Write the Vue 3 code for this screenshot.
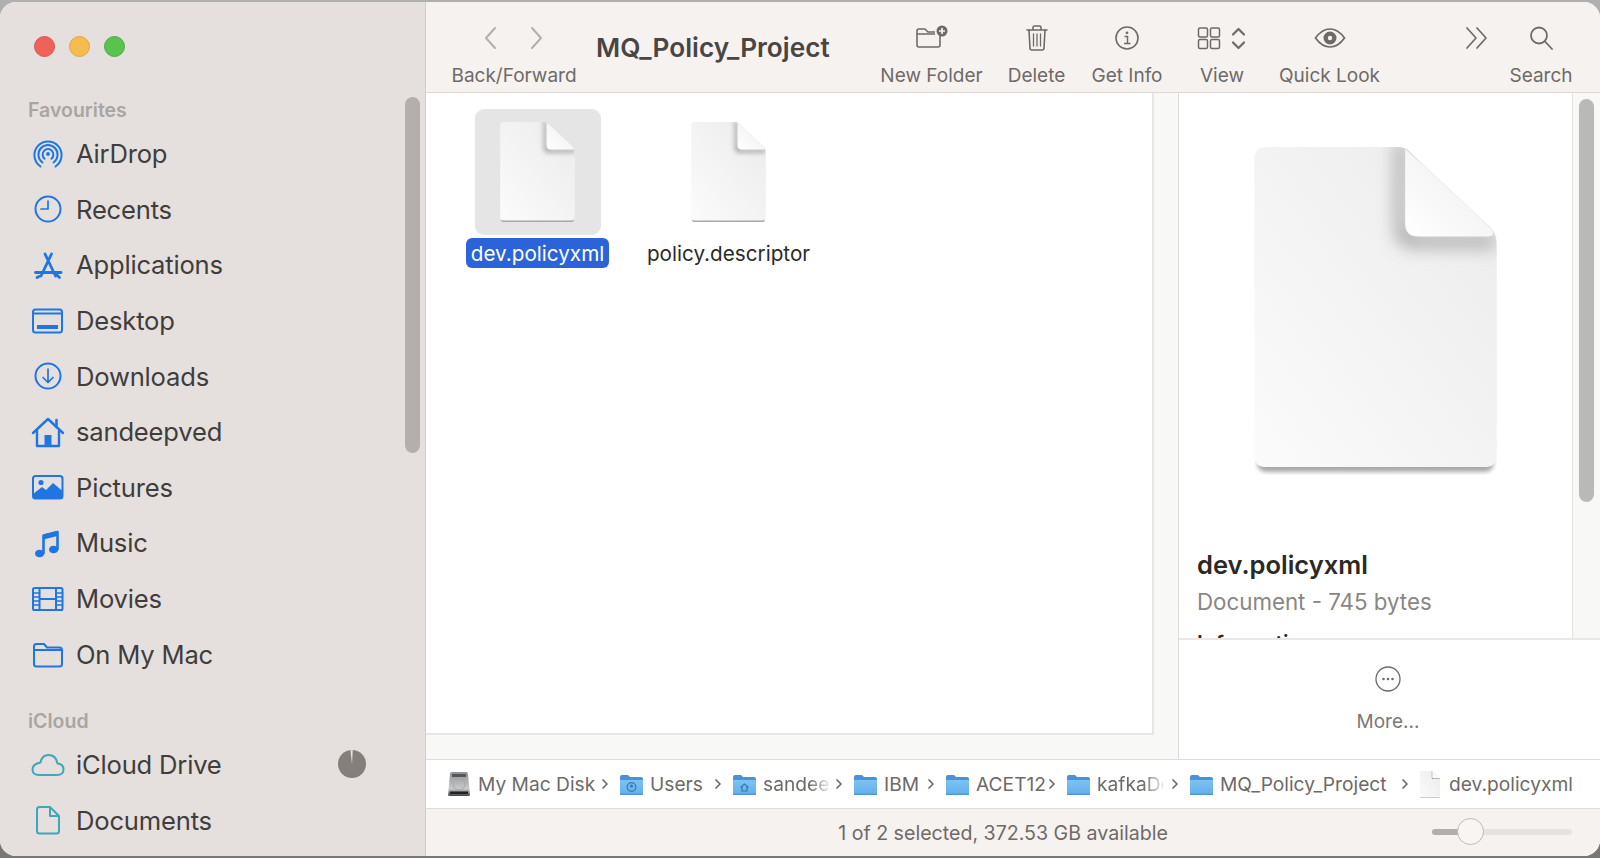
<script setup>
const favourites = [
  { name: 'AirDrop', icon: 'airdrop' },
  { name: 'Recents', icon: 'recents' },
  { name: 'Applications', icon: 'apps' },
  { name: 'Desktop', icon: 'desktop' },
  { name: 'Downloads', icon: 'downloads' },
  { name: 'sandeepved', icon: 'home' },
  { name: 'Pictures', icon: 'pictures' },
  { name: 'Music', icon: 'music' },
  { name: 'Movies', icon: 'movies' },
  { name: 'On My Mac', icon: 'folder' },
]
const crumbs = [
  { label: 'My Mac Disk', icon: 'disk', w: 173 },
  { label: 'Users', icon: 'users', w: 113 },
  { label: 'sandee', icon: 'homefolder', w: 121, fade: true },
  { label: 'IBM', icon: 'plain', w: 92 },
  { label: 'ACET12', icon: 'plain', w: 121 },
  { label: 'kafkaDev', icon: 'plain', w: 123, fade: true },
  { label: 'MQ_Policy_Project', icon: 'plain', w: 230 },
  { label: 'dev.policyxml', icon: 'doc', w: 155, last: true },
]
</script>

<template>
  <div class="page">
    <svg class="defs" width="0" height="0" aria-hidden="true">
      <defs>
        <linearGradient id="bodyGrad" x1="1" y1="0" x2="0" y2="1">
          <stop offset="0" stop-color="#ebebeb" />
          <stop offset="1" stop-color="#fbfbfb" />
        </linearGradient>
        <linearGradient id="foldGrad" x1="0" y1="1" x2="1" y2="0">
          <stop offset="0" stop-color="#ffffff" />
          <stop offset="0.55" stop-color="#f5f5f5" />
          <stop offset="1" stop-color="#dcdcdc" />
        </linearGradient>
        <filter id="soft" x="-40%" y="-40%" width="180%" height="180%">
          <feGaussianBlur stdDeviation="9" />
        </filter>
        <filter id="softSmall" x="-20%" y="-20%" width="140%" height="140%">
          <feGaussianBlur stdDeviation="2" />
        </filter>
        <clipPath id="bodyClip">
          <path d="M12 0H143Q150 0 155 5L235 80Q241 87 241 96V306Q241 318 229 318H12Q0 318 0 306V12Q0 0 12 0Z" />
        </clipPath>
        <symbol id="docIcon" viewBox="0 0 241 326">
          <rect x="3" y="306" width="235" height="17" rx="9" fill="#a8a8a8" filter="url(#softSmall)" />
          <path d="M12 0H143Q150 0 155 5L235 80Q241 87 241 96V306Q241 318 229 318H12Q0 318 0 306V12Q0 0 12 0Z" fill="url(#bodyGrad)" />
          <g clip-path="url(#bodyClip)">
            <path d="M150 -6V76Q150 89 163 89H241V98H158Q142 98 142 82V-6Z" fill="#8a8a8a" filter="url(#soft)" />
          </g>
          <path d="M150 2L236 82Q240 89 232 89H163Q150 89 150 76Z" fill="url(#foldGrad)" />
        </symbol>
      </defs>
    </svg>

    <div class="window">
      <aside class="sidebar">
        <div class="lights">
          <span class="light red"></span>
          <span class="light yellow"></span>
          <span class="light green"></span>
        </div>
        <div class="section-title">Favourites</div>
        <div v-for="item in favourites" :key="item.name" class="side-item">
          <span class="side-icon">
            <svg width="34" height="34" viewBox="0 0 34 34" fill="none" stroke="#1f76e3" stroke-width="2" stroke-linecap="round" stroke-linejoin="round">
              <template v-if="item.icon === 'airdrop'">
                <path d="M9.5 29.5A13.6 13.6 0 1 1 24.5 29.5" />
                <path d="M11.5 25.5A9.6 9.6 0 1 1 22.5 25.5" />
                <path d="M13.6 21.7A5.4 5.4 0 1 1 20.4 21.7" />
                <circle cx="17" cy="17" r="1.9" fill="#1f76e3" stroke="none" />
              </template>
              <template v-else-if="item.icon === 'recents'">
                <circle cx="17" cy="17" r="12.5" />
                <path d="M17 9V17H10" stroke-width="1.7" />
              </template>
              <template v-else-if="item.icon === 'apps'">
                <path d="M14 6L24.500 28M20.500 6L10 28" stroke-width="2.800" />
                <path d="M4.500 24.500H30" stroke-width="2.800" />
                <path d="M8 28.500L6 29.500M26 27L28.500 29.500" stroke-width="2.800" />
              </template>
              <template v-else-if="item.icon === 'desktop'">
                <rect x="2" y="5.5" width="29" height="23" rx="2.5" />
                <path d="M2 9.5H31" />
                <rect x="6" y="21" width="21" height="4" fill="#1f76e3" stroke="none" />
              </template>
              <template v-else-if="item.icon === 'downloads'">
                <circle cx="17" cy="17" r="12.5" />
                <path d="M17 10V23M12 18.5L17 23.5L22 18.5" stroke-width="1.7" />
              </template>
              <template v-else-if="item.icon === 'home'">
                <path d="M2 18L17 4L32 18" stroke-width="2.4" />
                <path d="M25.5 5V12" stroke-width="2.6" />
                <path d="M6 16V31H28V16" stroke-width="2.4" />
                <rect x="13.5" y="20" width="7" height="11" fill="#1f76e3" stroke="none" />
              </template>
              <template v-else-if="item.icon === 'pictures'">
                <rect x="2" y="6" width="29.5" height="22.5" rx="2.5" />
                <circle cx="10" cy="12.5" r="2.6" fill="#1f76e3" stroke="none" />
                <path d="M2 24L11 17L15 20L22 13L31.5 21V27Q31.5 29 29 29H4Q2 29 2 27Z" fill="#1f76e3" stroke="none" />
              </template>
              <template v-else-if="item.icon === 'music'">
                <path d="M12.5 27V9.5L26.5 6V23" stroke-width="2.6" />
                <ellipse cx="8.6" cy="27.5" rx="4.6" ry="3.8" fill="#1f76e3" stroke="none" />
                <ellipse cx="22.6" cy="23.5" rx="4.6" ry="3.8" fill="#1f76e3" stroke="none" />
                <path d="M12.5 8.5L26.5 5V10L12.5 13.5Z" fill="#1f76e3" stroke="none" />
              </template>
              <template v-else-if="item.icon === 'movies'">
                <rect x="2" y="6" width="29.5" height="22" rx="1.6" />
                <path d="M8.5 6V28M25 6V28M8.5 17H25" />
                <path d="M2 11H8.5M2 15H8.5M2 19H8.5M2 23H8.5M25 11H31.5M25 15H31.5M25 19H31.5M25 23H31.5" stroke-width="1.6" />
              </template>
              <template v-else>
                <path d="M3 10V27Q3 29.5 5.5 29.5H28.5Q31 29.5 31 27V13Q31 10.5 28.5 10.5H16L13 7H5.5Q3 7 3 9.5V13H31" />
              </template>
            </svg>
          </span>
          <span class="side-label">{{ item.name }}</span>
        </div>

        <div class="section-title cloud-title">iCloud</div>
        <div class="side-item">
          <span class="side-icon">
            <svg width="34" height="34" viewBox="0 0 34 34" fill="none" stroke="#3fa7b8" stroke-width="2" stroke-linejoin="round">
              <path d="M8 27H26Q32.5 27 32.5 21.5Q32.5 16 26.5 15.5Q25 7 17.5 7Q11 7 9.5 14.5Q1.5 16 1.5 21.5Q1.5 27 8 27Z" />
            </svg>
          </span>
          <span class="side-label">iCloud Drive</span>
          <svg class="pie" width="28" height="28" viewBox="0 0 28 28">
            <circle cx="14" cy="14" r="14" fill="#857f7c" />
            <path d="M14 14L12.4 .3H14.8Z" fill="#e8e4e2" />
          </svg>
        </div>
        <div class="side-item">
          <span class="side-icon">
            <svg width="34" height="34" viewBox="0 0 34 34" fill="none" stroke="#3fa7b8" stroke-width="2" stroke-linejoin="round">
              <path d="M8.5 4H19L28 13V28Q28 30.5 25.5 30.5H8.5Q6 30.5 6 28V6.500Q6 4 8.500 4Z" />
              <path d="M19 4V13H28" />
            </svg>
          </span>
          <span class="side-label">Documents</span>
        </div>
        <span class="thumb side-thumb"></span>
      </aside>

      <div class="main">
        <header class="toolbar">
          <div class="tool t-nav">
            <span class="tool-icon nav-icons">
              <svg width="18" height="26" viewBox="0 0 18 26" fill="none" stroke="#b3afad" stroke-width="2" stroke-linecap="round" stroke-linejoin="round"><path d="M13 3L4 13L13 23" /></svg>
              <svg width="18" height="26" viewBox="0 0 18 26" fill="none" stroke="#b3afad" stroke-width="2" stroke-linecap="round" stroke-linejoin="round"><path d="M5 3L14 13L5 23" /></svg>
            </span>
            <span class="tool-label">Back/Forward</span>
          </div>
          <div class="title">MQ_Policy_Project</div>
          <div class="tool t-new">
            <span class="tool-icon">
              <svg width="34" height="28" viewBox="0 0 34 28" fill="none" stroke="#6e6a68" stroke-width="1.6" stroke-linejoin="round">
                <path d="M25 10V21Q25 23 23 23H4Q2 23 2 21V7Q2 5 4 5H10L13 8H20M2 10H20" />
                <circle cx="27" cy="7" r="5.500" fill="#6e6a68" stroke="none" />
                <path d="M27 4V10M24 7H30" stroke="#f6f2f0" stroke-width="1.700" />
              </svg>
            </span>
            <span class="tool-label">New Folder</span>
          </div>
          <div class="tool t-del">
            <span class="tool-icon">
              <svg width="24" height="28" viewBox="0 0 24 28" fill="none" stroke="#6e6a68" stroke-width="1.6" stroke-linejoin="round" stroke-linecap="round">
                <path d="M2 6H22M8 6V3.500Q8 2 9.500 2H14.500Q16 2 16 3.500V6" />
                <path d="M4 6L5 24Q5 26 7 26H17Q19 26 19 24L20 6" />
                <path d="M8.500 10V22M12 10V22M15.500 10V22" stroke-width="1.300" />
              </svg>
            </span>
            <span class="tool-label">Delete</span>
          </div>
          <div class="tool t-info">
            <span class="tool-icon">
              <svg width="26" height="26" viewBox="0 0 26 26" fill="none" stroke="#6e6a68" stroke-width="1.600">
                <circle cx="13" cy="13" r="11" />
                <circle cx="13" cy="7.800" r="1.400" fill="#6e6a68" stroke="none" />
                <path d="M10.500 11.500H13.500V18.500M10 18.500H16.500" stroke-width="1.500" />
              </svg>
            </span>
            <span class="tool-label">Get Info</span>
          </div>
          <div class="tool t-view">
            <span class="tool-icon">
              <svg width="50" height="26" viewBox="0 0 50 26" fill="none" stroke="#6e6a68" stroke-width="1.500">
                <rect x="1.500" y="3" width="9" height="9" rx="1.500" />
                <rect x="13.500" y="3" width="9" height="9" rx="1.500" />
                <rect x="1.500" y="14.500" width="9" height="9" rx="1.500" />
                <rect x="13.500" y="14.500" width="9" height="9" rx="1.500" />
                <path d="M36 9.500L41.500 4L47 9.500M36 17.500L41.500 23L47 17.500" stroke-width="2.200" stroke-linecap="round" stroke-linejoin="round" />
              </svg>
            </span>
            <span class="tool-label">View</span>
          </div>
          <div class="tool t-look">
            <span class="tool-icon">
              <svg width="32" height="22" viewBox="0 0 32 22" fill="none" stroke="#6e6a68" stroke-width="1.700">
                <path d="M1.500 11Q8 2 16 2Q24 2 30.500 11Q24 20 16 20Q8 20 1.500 11Z" />
                <circle cx="16" cy="11" r="6.500" fill="#6e6a68" stroke="none" />
                <circle cx="16" cy="11" r="2.200" fill="#f6f2f0" stroke="none" />
              </svg>
            </span>
            <span class="tool-label">Quick Look</span>
          </div>
          <div class="tool t-more">
            <span class="tool-icon">
              <svg width="24" height="24" viewBox="0 0 24 24" fill="none" stroke="#6e6a68" stroke-width="1.700" stroke-linecap="round" stroke-linejoin="round">
                <path d="M2 2L11 12L2 22M12 2L21 12L12 22" />
              </svg>
            </span>
          </div>
          <div class="tool t-search">
            <span class="tool-icon">
              <svg width="26" height="26" viewBox="0 0 26 26" fill="none" stroke="#6e6a68" stroke-width="1.800" stroke-linecap="round">
                <circle cx="11" cy="10.500" r="8" />
                <path d="M17 16.500L24 24" />
              </svg>
            </span>
            <span class="tool-label">Search</span>
          </div>
        </header>

        <div class="content">
          <section class="files-col">
            <div class="files">
              <div class="file">
                <div class="file-art selected">
                  <svg class="small-doc" width="75" height="101"><use href="#docIcon" /></svg>
                </div>
                <span class="file-name active">dev.policyxml</span>
              </div>
              <div class="file">
                <div class="file-art">
                  <svg class="small-doc" width="75" height="101"><use href="#docIcon" /></svg>
                </div>
                <span class="file-name">policy.descriptor</span>
              </div>
            </div>
          </section>

          <section class="preview-col">
            <div class="preview-top">
              <div class="preview-body">
                <svg class="big-doc" width="243" height="328"><use href="#docIcon" /></svg>
                <div class="preview-name">dev.policyxml</div>
                <div class="preview-meta">Document - 745 bytes</div>
                <div class="preview-info">Information</div>
              </div>
              <div class="preview-gutter"><span class="thumb preview-thumb"></span></div>
            </div>
            <div class="actions">
              <svg width="26" height="26" viewBox="0 0 26 26" fill="none" stroke="#6e6a68" stroke-width="1.300">
                <circle cx="13" cy="13" r="12" />
                <circle cx="8.500" cy="13" r="1.300" fill="#6e6a68" stroke="none" />
                <circle cx="13" cy="13" r="1.300" fill="#6e6a68" stroke="none" />
                <circle cx="17.500" cy="13" r="1.300" fill="#6e6a68" stroke="none" />
              </svg>
              <span class="more-label">More...</span>
            </div>
          </section>
        </div>

        <nav class="pathbar">
          <div v-for="c in crumbs" :key="c.label" class="crumb" :style="{ width: c.w + 'px' }">
            <svg v-if="c.icon === 'disk'" class="crumb-icon" width="24" height="26" viewBox="0 0 24 26">
              <defs>
                <linearGradient id="diskGrad" x1="0" y1="0" x2="0" y2="1">
                  <stop offset="0" stop-color="#8f9193" />
                  <stop offset="0.7" stop-color="#c8cacb" />
                  <stop offset="1" stop-color="#3f4143" />
                </linearGradient>
              </defs>
              <path d="M3 3Q3 1 5 1H19Q21 1 21 3L23 24Q23 25 21 25H3Q1 25 1 24Z" fill="url(#diskGrad)" />
              <rect x="5" y="3" width="14" height="3" fill="#55585a" />
              <circle cx="12" cy="13" r="6" fill="none" stroke="#a5a8aa" />
              <rect x="3" y="20.500" width="18" height="2.500" fill="#222" />
            </svg>
            <svg v-else-if="c.icon === 'doc'" class="crumb-icon doc-crumb" width="20" height="27"><use href="#docIcon" /></svg>
            <svg v-else class="crumb-icon" width="23" height="23" viewBox="0 0 23 23">
              <defs>
                <linearGradient id="folderGrad" x1="0" y1="0" x2="0" y2="1">
                  <stop offset="0" stop-color="#7cc2f3" />
                  <stop offset="1" stop-color="#63aeeb" />
                </linearGradient>
              </defs>
              <path d="M0 4Q0 2 2 2H8L10 4H21Q23 4 23 6V9H0Z" fill="#4b91d6" />
              <path d="M0 7H23V20Q23 22 21 22H2Q0 22 0 20Z" fill="url(#folderGrad)" />
              <rect y="20.500" width="23" height="1.500" fill="#4f97d8" />
              <template v-if="c.icon === 'users'">
                <circle cx="11.500" cy="14" r="4.300" fill="none" stroke="#3577b8" stroke-width="1.200" />
                <circle cx="11.500" cy="13" r="1.600" fill="#3577b8" />
              </template>
              <path v-if="c.icon === 'homefolder'" d="M7.500 14.500L11.500 11L15.500 14.500M9 14V18H14V14" fill="none" stroke="#3577b8" stroke-width="1.200" />
            </svg>
            <span class="crumb-label" :class="{ fade: c.fade }">{{ c.label }}</span>
            <svg v-if="!c.last" class="crumb-sep" width="8" height="12" viewBox="0 0 8 12" fill="none" stroke="#6e6a68" stroke-width="1.700" stroke-linecap="round" stroke-linejoin="round"><path d="M2 2L6 6L2 10" /></svg>
          </div>
        </nav>

        <footer class="statusbar">
          <span class="status-text">1 of 2 selected, 372.53 GB available</span>
          <div class="slider">
            <span class="slider-fill"></span>
            <span class="slider-knob"></span>
          </div>
        </footer>
      </div>
    </div>
  </div>
</template>

<style>
html, body { margin: 0; background: #8d8d8d; overflow: hidden; }
</style>

<style scoped>
.page {
  width: 1600px;
  height: 858px;
  padding: 2px 0;
  box-sizing: border-box;
  background: linear-gradient(#b0b0b0 0 50%, #777 50% 100%);
  font-family: Inter, "Liberation Sans", sans-serif;
}
.defs { position: absolute; }
.window {
  display: flex;
  width: 1600px;
  height: 854px;
  border-radius: 16px;
  overflow: hidden;
  background: #fff;
}
.sidebar {
  position: relative;
  flex: none;
  width: 425px;
  background: #e5e0de;
  border-right: 1px solid #d2cdca;
  overflow: hidden;
  color: #403d3c;
}
.lights {
  display: flex;
  gap: 14px;
  padding: 34px 0 0 34px;
  height: 27px;
}
.light { width: 21px; height: 21px; border-radius: 50%; box-sizing: border-box; }
.red { background: #ee6259; border: 1px solid #d8544c; }
.yellow { background: #f5bd4f; border: 1px solid #dca63f; }
.green { background: #5ac24f; border: 1px solid #4cab42; }
.section-title {
  margin: 35px 0 4px 28px;
  height: 24px;
  line-height: 24px;
  font-size: 19.500px;
  font-weight: 600;
  color: #aaa5a3;
}
.cloud-title { margin-top: 27px; }
.side-item {
  display: flex;
  align-items: center;
  height: 55.600px;
  padding-left: 31px;
}
.side-icon { display: flex; width: 46px; flex: none; }
.side-label { font-size: 25.600px; letter-spacing: -0.2px; margin-left: -1px; }
.pie { margin-left: auto; margin-right: 59px; margin-top: -1px; }
.thumb {
  position: absolute;
  width: 15px;
  background: #b4afac;
  border-radius: 8px;
}
.side-thumb { left: 405px; top: 95px; height: 356px; }

.main {
  flex: 1;
  min-width: 0;
  display: flex;
  flex-direction: column;
}
.toolbar {
  flex: none;
  display: flex;
  height: 90px;
  background: #f6f2f0;
  border-bottom: 1px solid #dcd8d6;
  color: #6e6a68;
}
.tool {
  display: flex;
  flex-direction: column;
  align-items: center;
  flex: none;
}
.tool-icon {
  display: flex;
  align-items: center;
  justify-content: center;
  height: 30px;
  margin-top: 21px;
}
.tool-label {
  margin-top: 11px;
  line-height: 24px;
  font-size: 19px;
  white-space: nowrap;
}
.nav-icons { gap: 27px; margin-left: -1px; }
.t-nav { width: 124px; margin-left: 26px; }
.title {
  flex: none;
  width: 233px;
  margin-left: 20px;
  padding-top: 29px;
  line-height: 34px;
  font-size: 26.200px;
  font-weight: 600;
  color: #494543;
  white-space: nowrap;
}
.t-new { width: 103px; margin-left: 51px; }
.t-del { width: 59px; margin-left: 24px; }
.t-info { width: 72px; margin-left: 25px; }
.t-view { width: 50px; margin-left: 34px; }
.t-look { width: 101px; margin-left: 32px; }
.t-more { width: 30px; margin-left: 82px; }
.t-search { width: 64px; margin-left: 17px; }

.content { flex: 1; min-height: 0; display: flex; }
.files-col {
  flex: none;
  width: 753px;
  background: #f8f8f7;
  border-right: 1px solid #dcdad8;
  box-sizing: border-box;
}
.files {
  width: 728px;
  height: 642px;
  box-sizing: border-box;
  display: flex;
  padding: 16px 0 0 16px;
  background: #fff;
  border-bottom: 2px solid #e7e6e5;
  border-right: 2px solid #e7e6e5;
}
.file {
  width: 191px;
  display: flex;
  flex-direction: column;
  align-items: center;
}
.file-art {
  width: 126px;
  height: 126px;
  display: flex;
  justify-content: center;
  padding-top: 13px;
  box-sizing: border-box;
  border-radius: 9px;
}
.selected { background: #e5e5e5; }
.small-doc { display: block; }
.file-name {
  margin-top: 3px;
  height: 30px;
  line-height: 31px;
  padding: 0 5px;
  font-size: 20.700px;
  color: #2c2a29;
  border-radius: 6px;
  white-space: nowrap;
}
.active { background: #2c63d8; color: #fff; }

.preview-col { flex: 1; min-width: 0; display: flex; flex-direction: column; }
.preview-top { flex: 1; min-height: 0; display: flex; border-bottom: 2px solid #e9e8e7; }
.preview-body {
  flex: none;
  width: 394px;
  box-sizing: border-box;
  padding: 54px 0 0 18px;
  overflow: hidden;
  border-right: 1px solid #e2e1e0;
}
.big-doc { display: block; margin-left: 57px; }
.preview-name {
  margin-top: 73px;
  line-height: 34px;
  font-size: 25.500px;
  font-weight: 600;
  color: #2b2928;
}
.preview-meta {
  margin-top: 5px;
  line-height: 30px;
  font-size: 22.300px;
  color: #8a8684;
}
.preview-info {
  margin-top: 13px;
  line-height: 28px;
  font-size: 21px;
  font-weight: 600;
  color: #2b2928;
}
.preview-gutter { position: relative; flex: 1; background: #f8f8f7; }
.preview-thumb { left: 6px; top: 6px; height: 403px; background: #b9b9b8; }
.actions {
  flex: none;
  height: 119px;
  display: flex;
  flex-direction: column;
  align-items: center;
  padding-top: 26px;
  box-sizing: border-box;
  margin-right: 3px;
}
.more-label {
  margin-top: 18px;
  line-height: 24px;
  font-size: 19px;
  color: #7c7876;
}

.pathbar {
  flex: none;
  height: 50px;
  box-sizing: border-box;
  display: flex;
  align-items: center;
  padding-left: 21px;
  background: #fff;
  border-top: 1px solid #dfdddb;
  border-bottom: 1px solid #dfdddb;
}
.crumb {
  flex: none;
  display: flex;
  align-items: center;
  box-sizing: border-box;
  position: relative;
}
.crumb-icon { flex: none; margin-right: 7px; display: block; }
.doc-crumb { margin-right: 9px; }
.crumb-label {
  font-size: 19.200px;
  line-height: 26px;
  color: #6e6a68;
  white-space: nowrap;
  overflow: hidden;
}
.fade {
  width: 66px;
  -webkit-mask-image: linear-gradient(90deg, #000 70%, rgba(0,0,0,.15) 100%);
  mask-image: linear-gradient(90deg, #000 70%, rgba(0,0,0,.15) 100%);
}
.crumb-sep { position: absolute; right: 11px; top: 50%; margin-top: -6px; }

.statusbar {
  position: relative;
  flex: none;
  height: 47px;
  display: flex;
  align-items: center;
  justify-content: center;
  background: #f6f2f0;
}
.status-text {
  font-size: 19.600px;
  color: #6e6a68;
  padding-right: 20px;
}
.slider {
  position: absolute;
  left: 1006px;
  top: 20px;
  width: 140px;
  height: 6px;
  border-radius: 3px;
  background: #e6e2e0;
}
.slider-fill {
  display: block;
  width: 38px;
  height: 6px;
  border-radius: 3px;
  background: #b2aeac;
}
.slider-knob {
  position: absolute;
  left: 25px;
  top: -11px;
  width: 27px;
  height: 27px;
  box-sizing: border-box;
  border-radius: 50%;
  background: #f8f5f3;
  border: 1.500px solid #bdb9b7;
}
</style>
